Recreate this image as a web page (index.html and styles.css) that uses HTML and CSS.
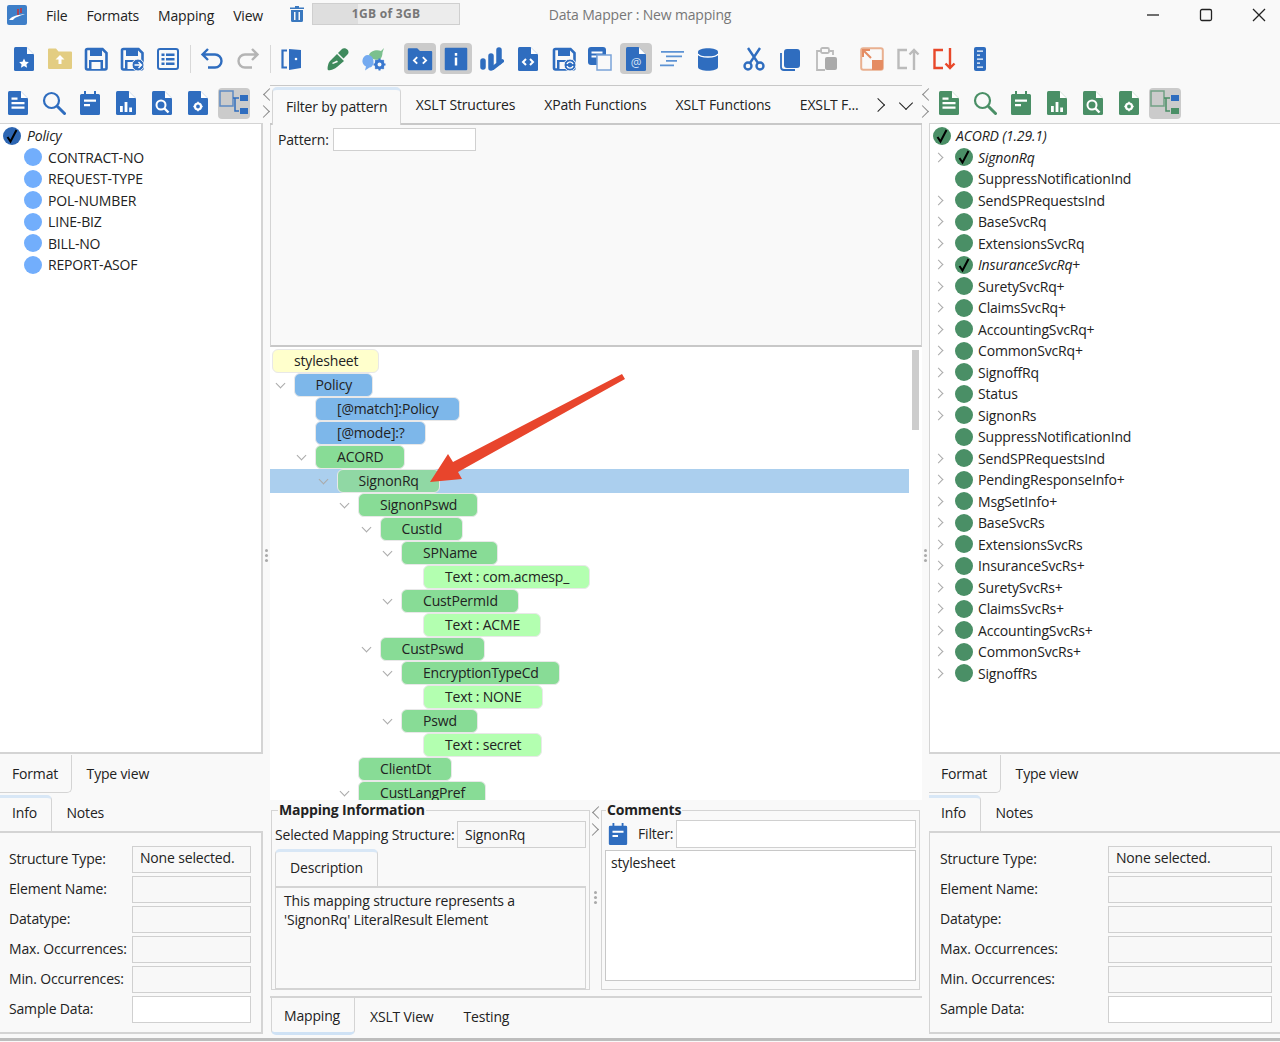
FILE: index.html
```html
<!DOCTYPE html>
<html>
<head>
    <title>Data Mapper : New mapping</title>
    <link rel="stylesheet" href="styles.css">
</head>
<body>
<svg class="defs" width="0" height="0">
    <symbol id="i-doc" viewBox="0 0 24 24"><path fill="currentColor" d="M3.500 0h11L22 7.500V22.500A1.500 1.500 0 0 1 20.500 24h-17A1.500 1.500 0 0 1 2 22.500V1.500A1.500 1.500 0 0 1 3.500 0z"/><path fill="#fff" d="M15 .5l6.500 6.500H15z"/></symbol>
    <symbol id="i-doclines" viewBox="0 0 24 24"><use href="#i-doc"/><path fill="#fff" d="M5.500 11h13v2.200h-13zM5.500 15.500h13v2.200h-13zM5.500 6.500h6v2.200h-6z"/></symbol>
    <symbol id="i-docstar" viewBox="0 0 24 24"><use href="#i-doc"/><path fill="#fff" d="M12 11.500l1.500 3.200 3.400.4-2.500 2.300.7 3.400-3.100-1.700-3.100 1.700.7-3.400-2.500-2.300 3.400-.4z"/></symbol>
    <symbol id="i-doccode" viewBox="0 0 24 24"><use href="#i-doc"/><path fill="none" stroke="#fff" stroke-width="2" d="M10 12l-3 3 3 3M14 12l3 3-3 3"/></symbol>
    <symbol id="i-docchart" viewBox="0 0 24 24"><use href="#i-doc"/><path fill="#fff" d="M6 15h2.800v6H6zM10.600 11h2.800v10h-2.800zM15.200 16.500H18V21h-2.800z"/></symbol>
    <symbol id="i-docsearch" viewBox="0 0 24 24"><use href="#i-doc"/><circle cx="11" cy="14" r="4.500" fill="none" stroke="#fff" stroke-width="2"/><path stroke="#fff" stroke-width="2.400" d="M14.500 17.500l4 4"/></symbol>
    <symbol id="i-docgear" viewBox="0 0 24 24"><use href="#i-doc"/><circle cx="12" cy="15.500" r="3" fill="none" stroke="#fff" stroke-width="2.200"/><path stroke="#fff" stroke-width="1.600" d="M12 10.800v2M12 18.200v2M7.300 15.500h2M14.700 15.500h2"/></symbol>
    <symbol id="i-search" viewBox="0 0 24 24"><circle cx="9.500" cy="9.500" r="7.500" fill="none" stroke="currentColor" stroke-width="2.200"/><path stroke="currentColor" stroke-width="3" stroke-linecap="round" d="M15.500 15.500l7 7"/></symbol>
    <symbol id="i-note" viewBox="0 0 24 24"><path fill="currentColor" d="M6 0h2v3h8V0h2v3h2.500A1.500 1.500 0 0 1 22 4.500v18a1.500 1.500 0 0 1-1.500 1.500h-17A1.500 1.500 0 0 1 2 22.500v-18A1.500 1.500 0 0 1 3.500 3H6z"/><path fill="#fff" d="M6 8.500h12v2.200H6zM6 13h6v2.200H6z"/></symbol>
    <symbol id="i-struct" viewBox="0 0 32 32"><rect x="2" y="4" width="13" height="15" fill="none" stroke="currentColor" stroke-opacity=".7" stroke-width="1.500"/><path fill="none" stroke="currentColor" stroke-width="1.500" d="M15 11h6M17 11v13h4"/><rect x="22" y="8" width="8" height="6" fill="#2f6dbf"/><rect x="22" y="21" width="8" height="6" fill="currentColor"/></symbol>
    <symbol id="i-folderup" viewBox="0 0 24 24"><path fill="#e3cd82" d="M0 2.500A1 1 0 0 1 1 1.500h7l2.500 3H23a1 1 0 0 1 1 1V21a1 1 0 0 1-1 1H1a1 1 0 0 1-1-1z"/><path fill="#fff" d="M12 8l4.500 4.500H13.500V17h-3v-4.500H7.500z"/></symbol>
    <symbol id="i-save" viewBox="0 0 24 24"><path fill="none" stroke="currentColor" stroke-width="2.600" d="M2 3.500A1.500 1.500 0 0 1 3.500 2h15L22.500 6v15a1.500 1.500 0 0 1-1.500 1.500H3.500A1.500 1.500 0 0 1 2 21z"/><path fill="currentColor" d="M6 2h12v7H6zM5 13h14v9H5z"/><path fill="#f9f9f9" d="M7.500 15h9v7h-9z"/></symbol>
    <symbol id="i-saveas" viewBox="0 0 24 24"><use href="#i-save"/><circle cx="18" cy="18" r="6" fill="currentColor" stroke="#f9f9f9"/><path fill="none" stroke="#fff" stroke-width="1.400" d="M14.500 18h7M18.500 15l3 3-3 3"/></symbol>
    <symbol id="i-saverf" viewBox="0 0 24 24"><use href="#i-save"/><circle cx="18" cy="18" r="6" fill="currentColor" stroke="#f9f9f9"/><path fill="none" stroke="#fff" stroke-width="1.400" d="M15 17a3.200 3.200 0 0 1 6 0M21 19a3.200 3.200 0 0 1-6 0"/></symbol>
    <symbol id="i-list" viewBox="0 0 24 24"><rect x="2" y="2" width="20" height="20" rx="2" fill="none" stroke="currentColor" stroke-width="2"/><path fill="currentColor" d="M5.500 6.500h3v2.500h-3zM10 6.500h8.500v2.500H10zM5.500 11h3v2.500h-3zM10 11h8.500v2.500H10zM5.500 15.500h3V18h-3zM10 15.500h8.500V18H10z"/></symbol>
    <symbol id="i-undo" viewBox="0 0 24 24"><path fill="none" stroke="currentColor" stroke-width="2.400" d="M8 2L2.500 7.500 8 13M3 7.500h12a6.500 6.500 0 0 1 0 13H8"/></symbol>
    <symbol id="i-redo" viewBox="0 0 24 24"><path fill="none" stroke="currentColor" stroke-width="2.400" d="M16 2l5.500 5.500L16 13M21 7.500H9a6.500 6.500 0 0 0 0 13h7"/></symbol>
    <symbol id="i-door" viewBox="0 0 24 24"><path fill="none" stroke="currentColor" stroke-width="2.200" d="M7 3.500H2.500v17H7"/><path fill="currentColor" d="M9 2l12 1v18l-12 2z"/><circle cx="16" cy="12" r="1.300" fill="#fff"/></symbol>
    <symbol id="i-pen" viewBox="0 0 24 24"><path fill="#3f8a5d" d="M2 23c-1-1 0-7 2-9l7-7 7 7-7 6c-2 2-8 4-9 3zM12 6l4-4c2-2 7 0 6.500 3.500 0 1-1 2-2 3l-3 3z"/><path fill="#f9f9f9" d="M6 16l5-2.500 1 1.500-5 2z"/></symbol>
    <symbol id="i-bots" viewBox="0 0 24 24"><path fill="#7bc08e" d="M7 8c1-4 8-6 12-4l3-3-1.500 4.500c0 3-1 6-3 7-4 1-9-1-10.500-4.500z"/><path fill="#74aaf0" d="M6 8c4 0 6 4 5.500 8-.5 3-2.500 4.500-4 4.500L3 23.500l1-4C1 18 0 15 .5 13 1 10 3 8 6 8z"/><circle cx="17.500" cy="17.500" r="3.500" fill="none" stroke="#3a78cf" stroke-width="3"/><path stroke="#3a78cf" stroke-width="2" d="M17.500 11.500v2.500M17.500 21v2.500M11.500 17.500H14M21 17.500h2.500M13.300 13.300l2 2M19.700 19.700l2 2M21.700 13.300l-2 2M15.300 19.700l-2 2"/></symbol>
    <symbol id="i-foldercode" viewBox="0 0 32 32"><path fill="currentColor" d="M3 5.500A1 1 0 0 1 4 4.500h9l3 3h12a1 1 0 0 1 1 1V27a1 1 0 0 1-1 1H4a1 1 0 0 1-1-1z"/><path fill="none" stroke="#fff" stroke-width="2" d="M13 14l-3.500 3.500L13 21M19 14l3.500 3.500L19 21"/></symbol>
    <symbol id="i-info" viewBox="0 0 32 32"><rect x="4" y="4" width="24" height="24" rx="1" fill="currentColor"/><path fill="#fff" d="M14.700 9.500h2.600v3h-2.600zM14.700 14.500h2.600V23h-2.600z"/></symbol>
    <symbol id="i-bars" viewBox="0 0 24 24"><g fill="none" stroke="currentColor" stroke-width="5.500" stroke-linecap="round"><path d="M3 14v6M11 9v12M19 3v12"/><path stroke-width="4" d="M13 21l9-7"/></g></symbol>
    <symbol id="i-copies" viewBox="0 0 24 24"><rect x="0" y="0" width="18" height="18" rx="3" fill="currentColor"/><path fill="#fff" d="M3.500 4.500h11v2h-11zM3.500 8.500h5v2h-5z"/><rect x="9" y="8" width="14" height="15" fill="#f9f9f9" stroke="#7aa3d8" stroke-width="1.500"/></symbol>
    <symbol id="i-align" viewBox="0 0 24 24"><path fill="#5d93d4" d="M1 4h23v1.800H1zM6 8.500h16v1.800H6zM6 13h11v1.800H6zM0 17.500h14v1.800H0z"/></symbol>
    <symbol id="i-db" viewBox="0 0 24 24"><path fill="currentColor" d="M2 5c0-5 20-5 20 0v15c0 5-20 5-20 0z"/><path fill="none" stroke="#fff" stroke-width="1.500" d="M2 7c2 4 18 4 20 0"/></symbol>
    <symbol id="i-cut" viewBox="0 0 24 24"><g fill="none" stroke="currentColor" stroke-width="2.400"><circle cx="6" cy="19" r="3.500"/><circle cx="18" cy="19" r="3.500"/><path d="M8 16L18 1M16 16L6 1"/></g></symbol>
    <symbol id="i-copy" viewBox="0 0 24 24"><rect x="6" y="2" width="16" height="19" rx="3" fill="currentColor"/><path fill="none" stroke="currentColor" stroke-width="1.800" d="M3 6v14a3 3 0 0 0 3 3h11"/></symbol>
    <symbol id="i-paste" viewBox="0 0 24 24"><path fill="none" stroke="#bbb" stroke-width="1.800" d="M8 4H3v19h8"/><rect x="7" y="1" width="8" height="5" rx="1.500" fill="none" stroke="#bbb" stroke-width="1.800"/><path fill="none" stroke="#bbb" stroke-width="1.800" d="M14 4h5v4"/><rect x="11" y="10" width="12" height="13" rx="2" fill="#aaa"/></symbol>
    <symbol id="i-expand" viewBox="0 0 24 24"><rect x="1.200" y="1.200" width="21.600" height="21.600" rx="2" fill="none" stroke="#e9b090" stroke-width="2"/><path fill="#e58c62" d="M12 13h11v8a2 2 0 0 1-2 2h-9z"/><path fill="none" stroke="#e58c62" stroke-width="2" d="M3 3l8 8M3 10V3h7"/></symbol>
    <symbol id="i-cup" viewBox="0 0 24 24"><path fill="none" stroke="#bbb" stroke-width="2.400" d="M11 3H2.500v18H11M18 23V3M13.500 7.500L18 3l4.500 4.500"/></symbol>
    <symbol id="i-cdown" viewBox="0 0 24 24"><path fill="none" stroke="#e8482a" stroke-width="2.400" d="M11 3H2.500v18H11M18 1v20M13.500 16.500L18 21l4.500-4.500"/></symbol>
    <symbol id="i-ruler" viewBox="0 0 24 24"><rect x="6" y="0" width="12" height="24" rx="2" fill="currentColor"/><path fill="#fff" d="M9 3.500h6v1.300H9zM9 7.500h3v1.300H9zM9 11.500h6v1.300H9zM9 15.500h3v1.300H9zM9 19.500h6v1.300H9z"/></symbol>
    <symbol id="i-check" viewBox="0 0 18 18"><path fill="none" stroke="#000" stroke-width="2" d="M4.500 10l3 4.500L13.500 3"/></symbol>
</svg>

<div class="app">
    <header class="titlebar">
        <div class="menu">
            <svg class="app-icon" viewBox="0 0 20 20"><rect width="20" height="20" rx="2" fill="#3f7fc8"/><path fill="#fff" d="M2 15c4-5 10-5 16-6-5 2-10 3-12 6z"/><path stroke="#c33" stroke-width="1.500" d="M11 4v6M14 3v5"/></svg>
            <span class="menu-item">File</span>
            <span class="menu-item">Formats</span>
            <span class="menu-item">Mapping</span>
            <span class="menu-item">View</span>
            <svg class="trash" viewBox="0 0 14 16"><path fill="#3a78bf" d="M5 0h4v1.500h5V3H0V1.500h5zM1 4h12v10.500a1.500 1.500 0 0 1-1.500 1.500h-9A1.500 1.500 0 0 1 1 14.500z"/><path fill="#f9f9f9" d="M4 6h1.500v8H4zM8.500 6H10v8H8.500z"/></svg>
            <div class="memory"><div class="memory-used"></div><span class="memory-label">1GB of 3GB</span></div>
        </div>
        <div class="window-title">Data Mapper : New mapping</div>
        <div class="window-btns">
            <svg viewBox="0 0 14 14"><path stroke="#222" stroke-width="1.300" d="M1 7h12"/></svg>
            <svg viewBox="0 0 14 14"><rect x="1.500" y="1.500" width="11" height="11" rx="1.500" fill="none" stroke="#222" stroke-width="1.300"/></svg>
            <svg viewBox="0 0 14 14"><path stroke="#222" stroke-width="1.300" d="M1 1l12 12M13 1L1 13"/></svg>
        </div>
    </header>

    <div class="toolbar">
        <span class="tool"><svg><use href="#i-docstar"/></svg></span>
        <span class="tool"><svg><use href="#i-folderup"/></svg></span>
        <span class="tool"><svg><use href="#i-save"/></svg></span>
        <span class="tool"><svg><use href="#i-saveas"/></svg></span>
        <span class="tool"><svg><use href="#i-list"/></svg></span>
        <span class="sep"></span>
        <span class="tool"><svg><use href="#i-undo"/></svg></span>
        <span class="tool off"><svg><use href="#i-redo"/></svg></span>
        <span class="sep"></span>
        <span class="tool"><svg><use href="#i-door"/></svg></span>
        <span class="gap"></span>
        <span class="tool"><svg><use href="#i-pen"/></svg></span>
        <span class="tool"><svg><use href="#i-bots"/></svg></span>
        <span class="gap"></span>
        <span class="tool on"><svg><use href="#i-foldercode"/></svg></span>
        <span class="tool on"><svg><use href="#i-info"/></svg></span>
        <span class="tool"><svg><use href="#i-bars"/></svg></span>
        <span class="tool"><svg><use href="#i-doccode"/></svg></span>
        <span class="tool"><svg><use href="#i-saverf"/></svg></span>
        <span class="tool"><svg><use href="#i-copies"/></svg></span>
        <span class="tool on"><svg class="doc-at" viewBox="0 0 24 24"><use href="#i-doc"/><text x="12" y="20" font-size="12" text-anchor="middle" fill="#cfe0f5">@</text></svg></span>
        <span class="tool"><svg><use href="#i-align"/></svg></span>
        <span class="tool"><svg><use href="#i-db"/></svg></span>
        <span class="gap"></span>
        <span class="tool"><svg><use href="#i-cut"/></svg></span>
        <span class="tool"><svg><use href="#i-copy"/></svg></span>
        <span class="tool"><svg><use href="#i-paste"/></svg></span>
        <span class="gap"></span>
        <span class="tool"><svg><use href="#i-expand"/></svg></span>
        <span class="tool"><svg><use href="#i-cup"/></svg></span>
        <span class="tool"><svg><use href="#i-cdown"/></svg></span>
        <span class="tool"><svg><use href="#i-ruler"/></svg></span>
    </div>

    <main class="columns">
        <section class="side side-left">
            <div class="side-tools">
                <span class="tool"><svg><use href="#i-doclines"/></svg></span>
                <span class="tool"><svg><use href="#i-search"/></svg></span>
                <span class="tool"><svg><use href="#i-note"/></svg></span>
                <span class="tool"><svg><use href="#i-docchart"/></svg></span>
                <span class="tool"><svg><use href="#i-docsearch"/></svg></span>
                <span class="tool"><svg><use href="#i-docgear"/></svg></span>
                <span class="tool on"><svg><use href="#i-struct"/></svg></span>
            </div>
            <div class="schema">
                <div class="node root"><span class="dot dark"><svg><use href="#i-check"/></svg></span><em>Policy</em></div>
                <div class="node"><span class="dot"></span>CONTRACT-NO</div>
                <div class="node"><span class="dot"></span>REQUEST-TYPE</div>
                <div class="node"><span class="dot"></span>POL-NUMBER</div>
                <div class="node"><span class="dot"></span>LINE-BIZ</div>
                <div class="node"><span class="dot"></span>BILL-NO</div>
                <div class="node"><span class="dot"></span>REPORT-ASOF</div>
            </div>
            <div class="tabs tabs-down">
                <span class="tab sel">Format</span>
                <span class="tab">Type view</span>
            </div>
            <div class="tabs tabs-up">
                <span class="tab sel">Info</span>
                <span class="tab">Notes</span>
            </div>
            <div class="props">
                <label>Structure Type:</label><div class="field">None selected.</div>
                <label>Element Name:</label><div class="field"></div>
                <label>Datatype:</label><div class="field"></div>
                <label>Max. Occurrences:</label><div class="field"></div>
                <label>Min. Occurrences:</label><div class="field"></div>
                <label>Sample Data:</label><div class="field white"></div>
            </div>
        </section>

        <div class="splitter">
            <span class="arrows"><i class="chev-l"></i><i class="chev-r"></i></span>
            <span class="dots"></span>
        </div>

        <section class="center">
            <div class="tabs tabs-main">
                <span class="tab sel">Filter by pattern</span>
                <span class="tab">XSLT Structures</span>
                <span class="tab">XPath Functions</span>
                <span class="tab">XSLT Functions</span>
                <span class="tab">EXSLT F...</span>
                <i class="chev-r dark"></i>
                <i class="chev-d"></i>
            </div>
            <div class="filter">
                <label>Pattern:</label><div class="field white pattern"></div>
            </div>
            <div class="mapping">
                <div class="mapping-rows">
                    <div class="row"><span class="pill yellow">stylesheet</span></div>
                    <div class="row d1"><i class="tw"></i><span class="pill blue">Policy</span></div>
                    <div class="row d2"><span class="pill blue">[@match]:Policy</span></div>
                    <div class="row d2"><span class="pill blue">[@mode]:?</span></div>
                    <div class="row d2"><i class="tw"></i><span class="pill green">ACORD</span></div>
                    <div class="row d3 selected"><i class="tw"></i><span class="pill green">SignonRq</span></div>
                    <div class="row d4"><i class="tw"></i><span class="pill green">SignonPswd</span></div>
                    <div class="row d5"><i class="tw"></i><span class="pill green">CustId</span></div>
                    <div class="row d6"><i class="tw"></i><span class="pill green">SPName</span></div>
                    <div class="row d7"><span class="pill lime">Text : com.acmesp_</span></div>
                    <div class="row d6"><i class="tw"></i><span class="pill green">CustPermId</span></div>
                    <div class="row d7"><span class="pill lime">Text : ACME</span></div>
                    <div class="row d5"><i class="tw"></i><span class="pill green">CustPswd</span></div>
                    <div class="row d6"><i class="tw"></i><span class="pill green">EncryptionTypeCd</span></div>
                    <div class="row d7"><span class="pill lime">Text : NONE</span></div>
                    <div class="row d6"><i class="tw"></i><span class="pill green">Pswd</span></div>
                    <div class="row d7"><span class="pill lime">Text : secret</span></div>
                    <div class="row d4"><span class="pill green">ClientDt</span></div>
                    <div class="row d4"><i class="tw"></i><span class="pill green">CustLangPref</span></div>
                </div>
                <div class="scrollbar"><div class="thumb"></div></div>
            </div>
            <div class="details">
                <fieldset class="group info-group">
                    <legend>Mapping Information</legend>
                    <div class="selected-line"><label>Selected Mapping Structure:</label><div class="field">SignonRq</div></div>
                    <div class="tabs tabs-desc"><span class="tab sel">Description</span></div>
                    <div class="desc">This mapping structure represents a<br>'SignonRq' LiteralResult Element</div>
                </fieldset>
                <div class="splitter small">
                    <span class="arrows"><i class="chev-l"></i><i class="chev-r"></i></span>
                    <span class="dots"></span>
                </div>
                <fieldset class="group comments">
                    <legend>Comments</legend>
                    <div class="filter-line"><svg class="note"><use href="#i-note"/></svg><label>Filter:</label><div class="field white"></div></div>
                    <div class="comment-box">stylesheet</div>
                </fieldset>
            </div>
            <div class="tabs tabs-bottom">
                <span class="tab sel">Mapping</span>
                <span class="tab">XSLT View</span>
                <span class="tab">Testing</span>
            </div>
            <svg class="callout" viewBox="0 0 210 125" width="210" height="125">
                <path fill="#e8452c" d="M202 9L205 14L38 107L42 114L10 117L28 89L33 97Z"/>
            </svg>
        </section>

        <div class="splitter">
            <span class="arrows"><i class="chev-l"></i><i class="chev-r"></i></span>
            <span class="dots"></span>
        </div>

        <section class="side side-right">
            <div class="side-tools">
                <span class="tool"><svg><use href="#i-doclines"/></svg></span>
                <span class="tool"><svg><use href="#i-search"/></svg></span>
                <span class="tool"><svg><use href="#i-note"/></svg></span>
                <span class="tool"><svg><use href="#i-docchart"/></svg></span>
                <span class="tool"><svg><use href="#i-docsearch"/></svg></span>
                <span class="tool"><svg><use href="#i-docgear"/></svg></span>
                <span class="tool on"><svg><use href="#i-struct"/></svg></span>
            </div>
            <div class="schema">
                <div class="node root"><span class="dot dark"><svg><use href="#i-check"/></svg></span><em>ACORD (1.29.1)</em></div>
                <div class="node more"><span class="dot dark"><svg><use href="#i-check"/></svg></span><em>SignonRq</em></div>
                <div class="node"><span class="dot"></span>SuppressNotificationInd</div>
                <div class="node more"><span class="dot"></span>SendSPRequestsInd</div>
                <div class="node more"><span class="dot"></span>BaseSvcRq</div>
                <div class="node more"><span class="dot"></span>ExtensionsSvcRq</div>
                <div class="node more"><span class="dot dark"><svg><use href="#i-check"/></svg></span><em>InsuranceSvcRq</em>+</div>
                <div class="node more"><span class="dot"></span>SuretySvcRq+</div>
                <div class="node more"><span class="dot"></span>ClaimsSvcRq+</div>
                <div class="node more"><span class="dot"></span>AccountingSvcRq+</div>
                <div class="node more"><span class="dot"></span>CommonSvcRq+</div>
                <div class="node more"><span class="dot"></span>SignoffRq</div>
                <div class="node more"><span class="dot"></span>Status</div>
                <div class="node more"><span class="dot"></span>SignonRs</div>
                <div class="node"><span class="dot"></span>SuppressNotificationInd</div>
                <div class="node more"><span class="dot"></span>SendSPRequestsInd</div>
                <div class="node more"><span class="dot"></span>PendingResponseInfo+</div>
                <div class="node more"><span class="dot"></span>MsgSetInfo+</div>
                <div class="node more"><span class="dot"></span>BaseSvcRs</div>
                <div class="node more"><span class="dot"></span>ExtensionsSvcRs</div>
                <div class="node more"><span class="dot"></span>InsuranceSvcRs+</div>
                <div class="node more"><span class="dot"></span>SuretySvcRs+</div>
                <div class="node more"><span class="dot"></span>ClaimsSvcRs+</div>
                <div class="node more"><span class="dot"></span>AccountingSvcRs+</div>
                <div class="node more"><span class="dot"></span>CommonSvcRs+</div>
                <div class="node more"><span class="dot"></span>SignoffRs</div>
            </div>
            <div class="tabs tabs-down">
                <span class="tab sel">Format</span>
                <span class="tab">Type view</span>
            </div>
            <div class="tabs tabs-up">
                <span class="tab sel">Info</span>
                <span class="tab">Notes</span>
            </div>
            <div class="props">
                <label>Structure Type:</label><div class="field">None selected.</div>
                <label>Element Name:</label><div class="field"></div>
                <label>Datatype:</label><div class="field"></div>
                <label>Max. Occurrences:</label><div class="field"></div>
                <label>Min. Occurrences:</label><div class="field"></div>
                <label>Sample Data:</label><div class="field white"></div>
            </div>
        </section>
    </main>
    <div class="statusline"></div>
</div>
</body>
</html>
```

FILE: styles.css
```css
html, body {
    margin: 0;
    height: 100%;
    overflow: hidden;
}

body {
    background-color: #f9f9f9;
    color: #222;
    font-family: "Open Sans", "Noto Sans", sans-serif;
    font-size: 14px;
    letter-spacing: -0.17px;
}

.defs {
    position: absolute;
}

.app {
    display: flex;
    flex-direction: column;
    height: 1042px;
}

/* title bar */
.titlebar {
    display: grid;
    grid-template-columns: 1fr auto 1fr;
    align-items: center;
    height: 30px;
    flex: none;
}

.menu {
    display: flex;
    align-items: center;
    padding-left: 7px;
    white-space: nowrap;
    width: 470px;
}

.app-icon {
    width: 20px;
    height: 20px;
    margin-right: 19px;
}

.menu-item {
    margin-right: 19px;
}

.trash {
    width: 14px;
    height: 16px;
    margin: -3px 8px 0 8px;
}

.memory {
    position: relative;
    width: 146px;
    height: 20px;
    margin-top: -2px;
    background-color: #ececec;
    border: 1px solid #cfcfcf;
}

.memory-used {
    width: 45px;
    height: 100%;
    background-color: #dedede;
}

.memory-label {
    position: absolute;
    inset: 0;
    text-align: center;
    line-height: 20px;
    font-size: 12px;
    font-weight: 700;
    letter-spacing: 0.3px;
    color: #777;
}

.window-title {
    color: #777;
    margin-top: -1px;
}

.window-btns {
    display: flex;
    justify-content: flex-end;
    gap: 39px;
    padding-right: 14px;
}

.window-btns svg {
    width: 14px;
    height: 14px;
}

/* toolbars */
.toolbar {
    display: flex;
    align-items: center;
    height: 55px;
    flex: none;
    padding: 2px 0 0 6px;
    box-sizing: border-box;
}

.tool {
    display: flex;
    align-items: center;
    justify-content: center;
    width: 36px;
    height: 31px;
    color: #2f6dbf;
    flex: none;
}

.tool svg {
    width: 24px;
    height: 24px;
}

.tool.on {
    background-color: #cbcbcb;
    border-radius: 4px;
    width: 32px;
    margin: 0 2px;
}

.tool.on svg {
    width: 30px;
    height: 30px;
}

.tool.on svg.doc-at {
    width: 24px;
    height: 24px;
}

.doc-at text {
    font-family: "Open Sans", sans-serif;
}

.tool.off {
    color: #b4b4b4;
}

.sep {
    width: 1px;
    height: 28px;
    margin: 0 3px 0 4px;
    background-color: #d8d8d8;
}

.gap {
    width: 10px;
    flex: none;
}

/* columns */
.columns {
    display: grid;
    grid-template-columns: 263px 7px 652px 7px 1fr;
    flex: 1;
    min-height: 0;
}

.side {
    display: flex;
    flex-direction: column;
    min-height: 0;
}

.side-tools {
    display: flex;
    align-items: center;
    height: 38px;
    flex: none;
    padding-bottom: 2px;
    box-sizing: border-box;
}

.side-tools .tool.on svg {
    width: 32px;
    height: 32px;
}

.side-right .tool {
    color: #4a8f66;
}

.side-right .side-tools {
    padding-left: 2px;
}

.schema {
    height: 631px;
    flex: none;
    box-sizing: border-box;
    background-color: #fff;
    border: 2px solid #d4d4d4;
    border-width: 1px 2px 2px 0;
    padding-top: 1px;
}

.side-right .schema {
    border-width: 1px 0 2px 1px;
}

.node {
    display: flex;
    align-items: center;
    height: 21.5px;
    padding-left: 24px;
    position: relative;
    white-space: nowrap;
}

.node.root {
    padding-left: 3px;
}

.side-right .node {
    padding-left: 25px;
}

.side-right .node.root {
    padding-left: 3px;
}

.dot {
    display: block;
    width: 18px;
    height: 18px;
    border-radius: 50%;
    background-color: #72aefc;
    margin-right: 6px;
    flex: none;
}

.dot svg {
    display: block;
    width: 18px;
    height: 18px;
}

.dot.dark {
    background-color: #2d66b3;
}

.side-right .dot,
.side-right .dot.dark {
    background-color: #4a8f66;
}

.side-right .dot {
    margin-right: 5px;
}

/* tree twisty on the schema tree */
.node.more::before {
    content: "";
    position: absolute;
    left: 5px;
    top: 7px;
    width: 6px;
    height: 6px;
    border-top: 1px solid #aaa;
    border-right: 1px solid #aaa;
    transform: rotate(45deg);
}

/* tabs */
.tabs {
    display: flex;
    align-items: center;
    flex: none;
}

.tab {
    padding: 0 14.5px;
    white-space: nowrap;
}

.tabs-down {
    height: 39px;
}

.tabs-down .tab.sel {
    height: 38px;
    line-height: 38px;
    border-right: 1px solid #d4d4d4;
    border-bottom: 1px solid #d4d4d4;
    border-radius: 0 0 5px 0;
    padding: 0 13px 0 12px;
    box-sizing: border-box;
}

.tabs-up {
    height: 40px;
    border-bottom: 2px solid #d4d4d4;
    align-items: flex-end;
    box-sizing: border-box;
}

.tabs-up .tab {
    line-height: 36px;
}

.tabs-up .tab.sel {
    height: 36px;
    line-height: 30px;
    border-top: 3px solid #d8e7f6;
    border-right: 1px solid #d4d4d4;
    border-radius: 0 5px 0 0;
    padding: 0 14px 0 12px;
    box-sizing: border-box;
}

.props {
    display: grid;
    grid-template-columns: 123px 119px;
    grid-auto-rows: 27px;
    gap: 3px 0;
    align-items: center;
    align-content: start;
    height: 201px;
    box-sizing: border-box;
    padding: 13px 0 0 9px;
    border-right: 2px solid #d4d4d4;
    border-bottom: 2px solid #d4d4d4;
}

.props label {
    padding-bottom: 3px;
}

.props .field {
    line-height: 22px;
}

.side-right .props {
    grid-template-columns: 168px 164px;
    padding-left: 10px;
    border-right: none;
    border-left: 1px solid #d4d4d4;
}

.field {
    height: 27px;
    line-height: 25px;
    box-sizing: border-box;
    padding-left: 7px;
    background-color: #f8f8f8;
    border: 1px solid #d0d0d0;
}

.field.white {
    background-color: #fff;
}

/* splitters */
.splitter {
    display: flex;
    flex-direction: column;
    align-items: center;
    position: relative;
    padding-top: 5px;
}

.arrows {
    display: flex;
    flex-direction: column;
    gap: 8px;
}

.dots {
    width: 3px;
    height: 3px;
    border-radius: 50%;
    background-color: #aaa;
    box-shadow: 0 5px 0 #aaa, 0 10px 0 #aaa;
    margin-top: 433px;
}

.chev-l, .chev-r {
    display: block;
    width: 9px;
    height: 9px;
    border-left: 1px solid #888;
    border-bottom: 1px solid #888;
    transform: translateX(3px) rotate(45deg);
    box-sizing: border-box;
}

.chev-r {
    transform: translateX(-3px) rotate(225deg);
}

.chev-r.dark {
    border-color: #222;
    margin-left: 2.5px;
    width: 10px;
    height: 10px;
}

.chev-d {
    display: block;
    width: 10px;
    height: 10px;
    margin: -4px 0 0 15px;
    border-left: 1px solid #222;
    border-bottom: 1px solid #222;
    transform: rotate(-45deg);
    box-sizing: border-box;
}

/* centre column */
.center {
    display: flex;
    flex-direction: column;
    min-height: 0;
    position: relative;
}

.tabs-main {
    height: 40px;
    padding: 0 0 0 2px;
    box-sizing: border-box;
    border-top: 1px solid #c8c8c8;
    border-bottom: 2px solid #c8c8c8;
    align-items: flex-end;
}

.tabs-main .tab {
    line-height: 36px;
}

.tabs-main .tab.sel {
    height: 38px;
    line-height: 33px;
    padding: 0 13px;
    border-top: 3px solid #d8e7f6;
    border-left: 1px solid #d4d4d4;
    border-right: 1px solid #d4d4d4;
    border-radius: 5px 5px 0 0;
    margin-bottom: -2px;
    box-sizing: border-box;
    background-color: #f9f9f9;
}

.tabs-main .chev-r.dark, .tabs-main .chev-d {
    align-self: center;
}

.filter {
    display: flex;
    align-items: flex-start;
    height: 222px;
    flex: none;
    box-sizing: border-box;
    padding: 3px 0 0 7px;
    border-left: 1px solid #d4d4d4;
    border-right: 1px solid #d4d4d4;
    border-bottom: 2px solid #c8c8c8;
}

.filter label {
    line-height: 23px;
    margin-right: 4px;
}

.pattern {
    width: 143px;
    height: 23px;
}

.mapping {
    display: flex;
    height: 453px;
    flex: none;
    background-color: #fff;
    overflow: hidden;
}

.mapping-rows {
    width: 639px;
    padding-top: 2px;
    flex: none;
}

.row {
    display: flex;
    align-items: center;
    height: 24px;
    padding-left: 2px;
    position: relative;
    box-sizing: border-box;
}

.row.d1 { padding-left: 23.5px; }
.row.d2 { padding-left: 45px; }
.row.d3 { padding-left: 66.5px; }
.row.d4 { padding-left: 88px; }
.row.d5 { padding-left: 109.5px; }
.row.d6 { padding-left: 131px; }
.row.d7 { padding-left: 153px; }

.row.selected {
    background-color: #abcfee;
}

.tw {
    display: block;
    width: 7px;
    height: 7px;
    margin: -4px 10px 0 -17px;
    border-left: 1px solid #aaa;
    border-bottom: 1px solid #aaa;
    transform: rotate(-45deg);
    flex: none;
    box-sizing: border-box;
}

.pill {
    display: block;
    height: 24px;
    line-height: 22px;
    box-sizing: border-box;
    padding: 0 20px 0 21px;
    border: 1px solid #e8e8e8;
    border-radius: 6px;
    white-space: nowrap;
}

.pill.yellow { background-color: #ffffcc; }
.pill.blue { background-color: #7db7ea; }
.pill.green { background-color: #88dc96; }
.pill.lime { background-color: #b3ffb0; }

.selected .pill.green {
    background-color: #90d8a4;
}

.scrollbar {
    flex: 1;
    padding: 3px 3px 0;
}

.thumb {
    width: 7px;
    height: 80px;
    background-color: #cdcdcd;
}

/* detail groups below the tree */
.details {
    display: grid;
    grid-template-columns: 320px 11px 319px;
    height: 198px;
    flex: none;
    border-bottom: 2px solid #d4d4d4;
    box-sizing: border-box;
}

.group {
    margin: 3px 0 0 0;
    padding: 0 3px;
    min-width: 0;
    height: 187px;
    box-sizing: border-box;
    border: 1px solid #d4d4d4;
}

.info-group {
    margin-left: 1px;
}

legend {
    font-weight: 700;
    padding: 0 1px;
    line-height: 14px;
    margin-left: 3px;
    color: #222;
}

.comments legend {
    margin-left: 1px;
}

.selected-line {
    display: flex;
    align-items: center;
    margin-top: 4px;
    white-space: nowrap;
}

.selected-line label {
    flex: 1;
}

.selected-line .field {
    width: 129px;
    flex: none;
}

.tabs-desc {
    height: 40px;
    align-items: flex-end;
    border-bottom: 2px solid #d4d4d4;
    box-sizing: border-box;
}

.tabs-desc .tab.sel {
    height: 37px;
    line-height: 32px;
    padding: 0 14px;
    border: 1px solid #d4d4d4;
    border-top: 3px solid #d8e7f6;
    border-bottom: none;
    border-radius: 5px 5px 0 0;
    box-sizing: border-box;
}

.desc {
    height: 102px;
    box-sizing: border-box;
    padding: 3px 8px;
    line-height: 19px;
    border: 1px solid #d4d4d4;
    border-top: none;
    border-bottom-width: 2px;
}

.splitter.small {
    padding-top: 8px;
}

.splitter.small .dots {
    margin-top: 57px;
}

.filter-line {
    display: flex;
    align-items: center;
    padding-left: 2px;
    margin-top: 2px;
    height: 29px;
}

.note {
    width: 22px;
    height: 24px;
    color: #2f6dbf;
    margin-right: 9px;
    flex: none;
}

.filter-line label {
    margin-right: 3px;
}

.filter-line .field {
    flex: 1;
    height: 28px;
}

.comment-box {
    height: 131px;
    box-sizing: border-box;
    margin-top: 2px;
    padding: 2px 5px;
    background-color: #fff;
    border: 1px solid #c8c8c8;
}

.tabs-bottom {
    height: 37px;
    align-items: flex-start;
}

.tabs-bottom .tab {
    line-height: 38px;
    padding: 0 15px;
}

.tabs-bottom .tab.sel {
    height: 37px;
    line-height: 36px;
    padding: 0 14px 0 12px;
    margin-left: 1px;
    border-right: 1px solid #d4d4d4;
    border-left: 1px solid #d4d4d4;
    border-bottom: 3px solid #cfe2f5;
    border-radius: 0 0 5px 5px;
    box-sizing: border-box;
}

/* red annotation arrow over the tree */
.callout {
    position: absolute;
    left: 150px;
    top: 280px;
}

.statusline {
    height: 3px;
    flex: none;
    background-color: #bdbdbd;
    margin-bottom: 1px;
}
```
